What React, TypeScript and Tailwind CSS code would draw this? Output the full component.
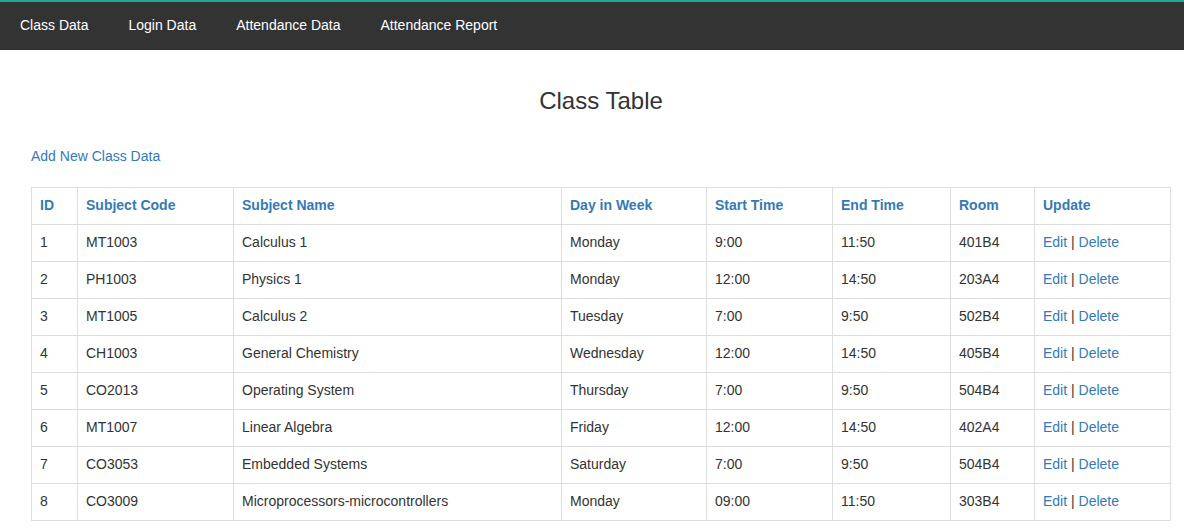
import React from 'react';

const navItems = ['Class Data', 'Login Data', 'Attendance Data', 'Attendance Report'];

const columns = [
  { label: 'ID', width: 'w-[46px]' },
  { label: 'Subject Code', width: 'w-[156px]' },
  { label: 'Subject Name', width: 'w-[328px]' },
  { label: 'Day in Week', width: 'w-[145px]' },
  { label: 'Start Time', width: 'w-[126px]' },
  { label: 'End Time', width: 'w-[118px]' },
  { label: 'Room', width: 'w-[84px]' },
  { label: 'Update', width: '' },
];

const classes = [
  [1, 'MT1003', 'Calculus 1', 'Monday', '9:00', '11:50', '401B4'],
  [2, 'PH1003', 'Physics 1', 'Monday', '12:00', '14:50', '203A4'],
  [3, 'MT1005', 'Calculus 2', 'Tuesday', '7:00', '9:50', '502B4'],
  [4, 'CH1003', 'General Chemistry', 'Wednesday', '12:00', '14:50', '405B4'],
  [5, 'CO2013', 'Operating System', 'Thursday', '7:00', '9:50', '504B4'],
  [6, 'MT1007', 'Linear Algebra', 'Friday', '12:00', '14:50', '402A4'],
  [7, 'CO3053', 'Embedded Systems', 'Saturday', '7:00', '9:50', '504B4'],
  [8, 'CO3009', 'Microprocessors-microcontrollers', 'Monday', '09:00', '11:50', '303B4'],
];

export default function App() {
  return (
    <div className="min-h-[532px] bg-white text-[14px] leading-[20px] text-[#333] font-['Liberation_Sans',Arial,sans-serif]">
      {/* top navigation */}
      <nav className="h-[50px] bg-[#333] border-t-[2px] border-[#1ba88c] flex items-center">
        {navItems.map((item) => (
          <a key={item} className="px-[20px] text-white cursor-pointer -mt-[2px]">
            {item}
          </a>
        ))}
      </nav>

      <div className="ml-[31px] w-[1140px]">
        <h2 className="mt-[38px] text-center text-[24px] leading-[26px] font-normal">Class Table</h2>

        <a className="block mt-[32px] text-[#337ab7] cursor-pointer w-fit">Add New Class Data</a>

        {/* class table */}
        <table className="mt-[21px] w-[1140px] border-collapse border border-[#ddd]">
          <thead>
            <tr>
              {columns.map((col) => (
                <th
                  key={col.label}
                  className={`${col.width} border border-[#ddd] px-[8px] pt-[7px] pb-[9px] text-left font-bold text-[#337ab7]`}
                >
                  {col.label}
                </th>
              ))}
            </tr>
          </thead>
          <tbody>
            {classes.map((row) => (
              <tr key={row[0]}>
                {row.map((cell, i) => (
                  <td key={i} className="border border-[#ddd] px-[8px] pt-[7px] pb-[9px]">
                    {cell}
                  </td>
                ))}
                <td className="border border-[#ddd] px-[8px] pt-[7px] pb-[9px]">
                  <a className="text-[#337ab7] cursor-pointer">Edit</a> |{' '}
                  <a className="text-[#337ab7] cursor-pointer">Delete</a>
                </td>
              </tr>
            ))}
          </tbody>
        </table>
      </div>
    </div>
  );
}
